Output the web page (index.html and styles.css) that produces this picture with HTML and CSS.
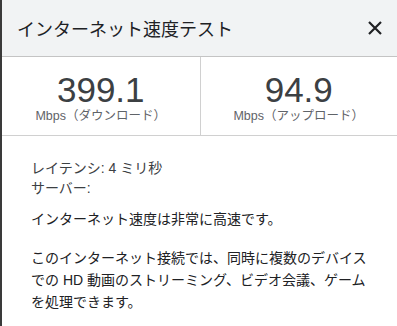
FILE: index.html
```html
<!DOCTYPE html>
<html lang="ja">
<head>
    <meta charset="UTF-8">
    <meta name="viewport" content="width=device-width, initial-scale=1.0">
    <title>インターネット速度テスト</title>
    <link rel="stylesheet" href="styles.css">
</head>
<body>
    <div class="panel">
        <div class="header">
            <h1 class="title">インターネット速度テスト</h1>
            <button class="close-btn" aria-label="閉じる">
                <svg width="14" height="14" viewBox="0 0 14 14">
                    <path d="M1 1 L13 13 M13 1 L1 13" stroke="#202124" stroke-width="2.2" fill="none"/>
                </svg>
            </button>
        </div>

        <div class="stats">
            <div class="stat">
                <div class="stat-value">399.1</div>
                <div class="stat-label">Mbps（ダウンロード）</div>
            </div>
            <div class="stat">
                <div class="stat-value">94.9</div>
                <div class="stat-label">Mbps（アップロード）</div>
            </div>
        </div>

        <div class="details">
            <div class="meta">
                <div>レイテンシ: 4 ミリ秒</div>
                <div>サーバー: </div>
            </div>
            <p>インターネット速度は非常に高速です。</p>
            <p>このインターネット接続では、同時に複数のデバイスでの HD 動画のストリーミング、ビデオ会議、ゲームを処理できます。</p>
        </div>
    </div>
</body>
</html>
```

FILE: styles.css
```css
* {
    margin: 0;
    padding: 0;
    box-sizing: border-box;
}

body {
    width: 397px;
    height: 326px;
    overflow: hidden;
    background: #fff;
    font-family: Arial, "Liberation Sans", "Noto Sans CJK JP", sans-serif;
    color: #202124;
}

.panel {
    height: 100%;
    border-left: 2px solid #3a3a3a;
}

.header {
    height: 57px;
    display: flex;
    align-items: center;
    justify-content: space-between;
    padding: 0 15px 0 15px;
    background: #f1f3f4;
    border-bottom: 1px solid #c4c4c4;
}

.title {
    font-size: 18px;
    font-weight: normal;
    color: #202124;
}

.close-btn {
    background: none;
    border: none;
    width: 14px;
    height: 14px;
    display: flex;
    cursor: pointer;
}

.stats {
    display: grid;
    grid-template-columns: 1fr 1fr;
    height: 79px;
    border-bottom: 1px solid #d0d0d0;
}

.stat {
    display: flex;
    flex-direction: column;
    align-items: center;
    padding-top: 15px;
}

.stat + .stat {
    border-left: 1px solid #d0d0d0;
}

.stat-value {
    font-size: 35px;
    line-height: 36px;
    color: #3c4043;
}

.stat-label {
    font-size: 12.5px;
    line-height: 16px;
    color: #5f6368;
}

.details {
    padding: 22px 24px 0 29px;
    font-size: 14px;
    line-height: 22px;
    color: #202124;
}

.meta {
    line-height: 20px;
    color: #3c4043;
    margin-bottom: 10px;
}

.details p {
    margin-bottom: 17px;
}
```
